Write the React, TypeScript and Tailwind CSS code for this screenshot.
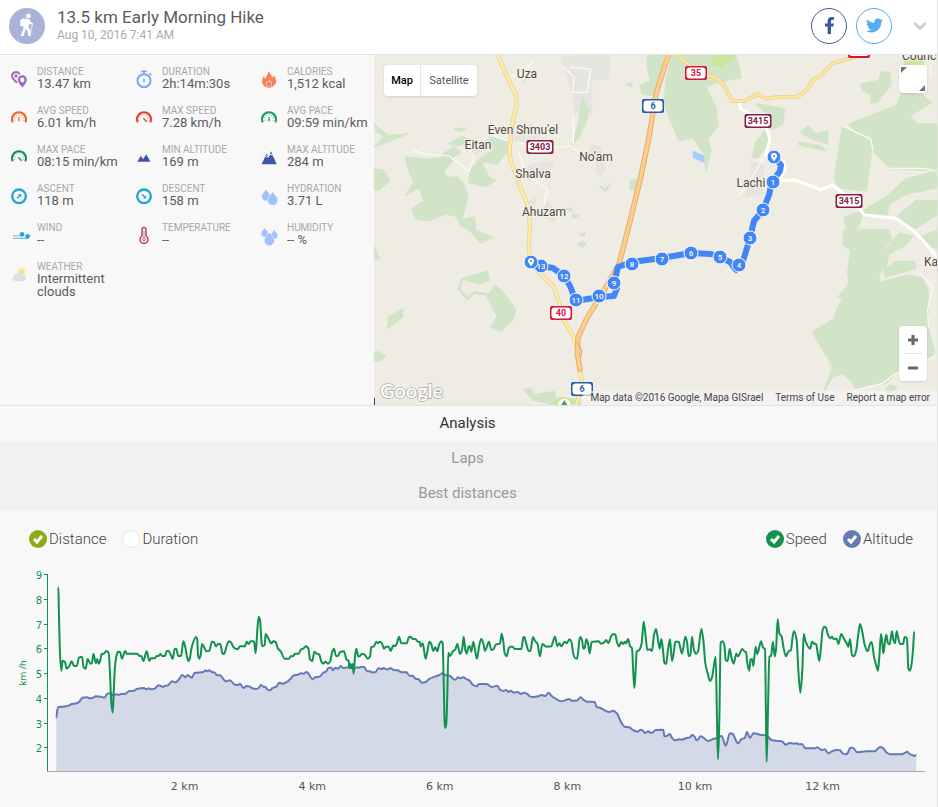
import { useState } from "react";
import type { ReactNode } from "react";
import { FaFacebookF, FaTwitter } from "react-icons/fa";

/* ---------- stat icons, drawn on a 48 unit grid ---------- */

function Gauge({ color, needle }: { color: string; needle: string }) {
  return (
    <g fill="none" stroke={color}>
      <path d="M5 37A21 21 0 1 1 43 37" strokeWidth="6" />
      <path d="M12 32A13 13 0 1 1 36 32" strokeWidth="3" strokeDasharray="3 5" opacity=".7" />
      <path d={needle} strokeWidth="4" />
    </g>
  );
}

const drop = (x: number, y: number, s: number) => (
  <path
    transform={`translate(${x} ${y}) scale(${s})`}
    d="M0 -18C5 -10 14 -3 14 5A14 14 0 0 1 -14 5C-14 -3 -5 -10 0 -18Z"
    fill="#a0c1fd"
    stroke="#f8f8f8"
    strokeWidth="1.500"
  />
);

const icons: Record<string, ReactNode> = {
  distance: (
    <g fill="none" stroke="#a069b4" strokeWidth="7">
      <path d="M18 35C10 27 3 21 3 14A12 11 0 0 1 26 10" strokeWidth="6" />
      <circle cx="15" cy="15" r="3" strokeWidth="4" />
      <path d="M34 44C29 38 24 32 24 26A10 10 0 0 1 44 26C44 32 39 38 34 44Z" />
      <path d="M29 35L34 46L40 35Z" fill="#a069b4" strokeWidth="2" />
    </g>
  ),
  duration: (
    <g fill="none" stroke="#78a7fd">
      <circle cx="24" cy="29" r="19.500" strokeWidth="6" />
      <path d="M16 1H32M24 2V9M40 7L46 12" strokeWidth="5" />
      <path d="M24 23V33" strokeWidth="5" />
    </g>
  ),
  calories: (
    <g>
      <path d="M22 0C27 8 33 13 34 20C37 18 38 15 38 12C43 20 46 27 45 34C43 43 34 50 24 50C12 50 3 42 3 31C3 25 6 20 9 15C10 19 11 22 14 23C15 14 23 9 22 0Z" fill="#f8815a" />
      <path d="M24 24C28 31 34 34 33 39A9 9 0 0 1 15 39C15 35 17 32 19 30L21 34C24 32 25 28 24 24Z" fill="#fbd0c1" />
      <circle cx="24" cy="40" r="7" fill="#f8815a" />
    </g>
  ),
  avgSpeed: <Gauge color="#f26522" needle="M24 22V34" />,
  maxSpeed: <Gauge color="#e0412f" needle="M22 25L32 35" />,
  avgPace: <Gauge color="#12a05c" needle="M24 22V34" />,
  maxPace: <Gauge color="#178a6a" needle="M22 25L32 35" />,
  minAltitude: (
    <g fill="#3f56a6">
      <path d="M4 38L15 19L24 38ZM16 38L31 15L43 38Z" />
      <path d="M12 25L15 19L19 26M26 23L31 15L36 24" stroke="#c9d2ec" strokeWidth="2" fill="none" />
    </g>
  ),
  maxAltitude: (
    <g fill="#3f56a6">
      <path d="M2 46L17 13L30 46ZM15 46L30 7L47 46Z" />
      <path d="M12 24L17 20L20 26M24 20L30 15L35 21" stroke="#e3e8f5" strokeWidth="3" fill="none" />
    </g>
  ),
  ascent: (
    <g stroke="#1fa7d2" fill="none">
      <circle cx="24" cy="25" r="20.500" strokeWidth="7" />
      <path d="M18 31L27 22" strokeWidth="4" />
      <path d="M22 19H30V27Z" fill="#1fa7d2" />
    </g>
  ),
  descent: (
    <g stroke="#1fa7d2" fill="none">
      <circle cx="24" cy="25" r="20.500" strokeWidth="7" />
      <path d="M18 19L27 28" strokeWidth="4" />
      <path d="M30 23V31H22Z" fill="#1fa7d2" />
    </g>
  ),
  hydration: (
    <g>
      {drop(15, 21, 0.95)}
      {drop(35, 31, 1.1)}
    </g>
  ),
  wind: (
    <g fill="none">
      <path d="M6 26H36" stroke="#b9c4cf" strokeWidth="4" />
      <path d="M6 34H50" stroke="#7dc4de" strokeWidth="4" />
      <circle cx="33" cy="22" r="7" fill="#1fa7d2" />
      <circle cx="50" cy="28" r="7" fill="#1fa7d2" />
    </g>
  ),
  temperature: (
    <g fill="none" stroke="#bd5a78">
      <path d="M18 27V8A6 6 0 0 1 30 8V27A12 12 0 1 1 18 27Z" strokeWidth="5" />
      <path d="M24 10V34" stroke="#e0a48c" strokeWidth="4" />
      <circle cx="24" cy="37" r="4" fill="#fff" stroke="#c34f6f" strokeWidth="3" />
    </g>
  ),
  humidity: (
    <g>
      {drop(11, 16, 0.75)}
      {drop(40, 22, 0.75)}
      {drop(25, 35, 1.1)}
    </g>
  ),
  weather: (
    <g>
      <path d="M32 2V30M18 16H48M22 6L43 27M43 6L22 27" stroke="#fbe49a" strokeWidth="3" />
      <circle cx="32" cy="17" r="8" fill="#fbdf85" />
      <path d="M11 46A9 9 0 0 1 10 29A13 12 0 0 1 33 25A10 10 0 0 1 36 46Z" fill="#e1e1e1" />
    </g>
  ),
};

const stats: [string, string, string][] = [
  ["distance", "Distance", "13.47 km"],
  ["duration", "Duration", "2h:14m:30s"],
  ["calories", "Calories", "1,512 kcal"],
  ["avgSpeed", "Avg Speed", "6.01 km/h"],
  ["maxSpeed", "Max Speed", "7.28 km/h"],
  ["avgPace", "Avg Pace", "09:59 min/km"],
  ["maxPace", "Max Pace", "08:15 min/km"],
  ["minAltitude", "Min Altitude", "169 m"],
  ["maxAltitude", "Max Altitude", "284 m"],
  ["ascent", "Ascent", "118 m"],
  ["descent", "Descent", "158 m"],
  ["hydration", "Hydration", "3.71 L"],
  ["wind", "Wind", "--"],
  ["temperature", "Temperature", "--"],
  ["humidity", "Humidity", "-- %"],
  ["weather", "Weather", "Intermittent clouds"],
];

function Header() {
  return (
    <header className="flex h-[55px] items-center border-b border-[#e3e3e3] bg-white pl-[9px] pr-[10px]">
      <svg viewBox="0 0 108 108" className="mb-[3px] size-9 shrink-0" aria-hidden="true">
        <circle cx="54" cy="54" r="54" fill="#a9b3da" />
        <g fill="#fff">
          <circle cx="58" cy="24" r="7" />
          <path d="M34 37L44 30L50 34L45 56L33 53Z" />
          <path d="M51 32L61 33L65 42L72 46L71 51L61 47L58 56L64 66L65 84L58 84L56 70L50 62L44 84L35 84L43 62L45 48Z" />
          <path d="M71 46L63 84" stroke="#fff" strokeWidth="2" />
        </g>
      </svg>
      <div className="mb-[5px] ml-3 flex-1">
        <h1 className="text-[17px] leading-5 text-[#5c5c5c]">13.5 km Early Morning Hike</h1>
        <p className="text-[12px] leading-4 text-[#aaa]">Aug 10, 2016 7:41 AM</p>
      </div>
      <div className="mb-[3px] flex items-center gap-[9px]">
        <button aria-label="Share on Facebook" className="grid size-9 place-items-center rounded-full border border-[#3b5998] text-[#3b5998]">
          <FaFacebookF size={17} />
        </button>
        <button aria-label="Share on Twitter" className="grid size-9 place-items-center rounded-full border border-[#55acee] text-[#55acee]">
          <FaTwitter size={17} />
        </button>
        <button aria-label="More" className="ml-3 grid h-9 w-[14px] place-items-center">
          <svg viewBox="0 0 14 10" className="h-[10px] w-[14px]">
            <path d="M1.500 2L7 7.500L12.500 2" fill="none" stroke="#ccc" strokeWidth="2.500" />
          </svg>
        </button>
      </div>
    </header>
  );
}

function Stats() {
  return (
    <dl className="grid w-[375px] shrink-0 grid-cols-3 content-start gap-y-[15px] pt-[11px]">
      {stats.map(([id, label, value]) => (
        <div key={id} className="flex pl-[11px]">
          <svg viewBox="0 0 48 48" className="mt-[5px] size-4 shrink-0 overflow-visible" aria-hidden="true">
            {icons[id]}
          </svg>
          <div className="ml-[10px]">
            <dt className="text-[10px] leading-[11px] text-[#a8a8a8] uppercase">{label}</dt>
            <dd className="text-[13px] leading-[13px] text-[#5c5c5c]">{value}</dd>
          </div>
        </div>
      ))}
    </dl>
  );
}

/* ---------- map ---------- */

const woods = [
  "95,310 160,315 225,310 235,320 210,350 215,370 250,370 275,400 280,430 265,490 215,480 160,500 125,495 115,465 150,440 135,400 95,425 120,385 105,350",
  "290,345 320,320 345,370 365,380 335,397 285,385",
  "0,345 30,350 45,380 15,408 0,408",
  "350,250 400,265 400,290 370,330 310,320 355,290",
  "0,210 40,245 100,240 60,255 0,280 30,250",
  "225,270 265,248 290,262 250,275",
  "240,225 275,222 260,232",
  "200,305 240,280 260,295 235,310",
  "625,130 635,155 645,165 640,190 620,240 590,280 605,245 615,200",
  "820,10 846,0 870,0 846,125 805,120 800,95 830,80 820,40",
  "757,90 775,88 770,97",
  "770,380 790,375 785,410 768,405",
  "678,395 690,410 710,390 695,412",
  "250,490 270,495 300,490 305,530 355,550 320,566 290,530 262,515",
  "595,482 612,485 600,492",
  "575,465 590,462 595,470",
  "896,0 1086,0 1101,70 1026,85 996,100 1026,160 1031,215 1001,255 1011,290 996,350 991,300 956,250 916,260 886,190 871,150 876,80",
  "1176,155 1231,165 1226,210 1196,225 1191,190 1146,150",
  "1176,228 1186,265 1151,310 1134,310 1146,265",
  "1461,90 1516,80 1521,55 1546,55 1551,90 1511,145 1491,145 1491,120 1466,110",
  "1566,160 1586,115 1646,125 1671,145 1616,180",
  "1426,210 1566,155 1606,180 1626,210 1692,210 1692,350 1551,343 1496,290 1491,255 1446,235",
  "1406,215 1466,245 1496,270 1476,410 1391,400 1381,370 1391,310",
  "1281,235 1301,215 1326,240 1361,230 1361,270 1316,255",
  "1274,265 1336,275 1356,290 1276,272",
  "1692,350 1692,400 1596,420 1546,450 1536,490 1466,485 1446,528 1420,528 1411,490 1466,470 1536,430 1596,375",
  "1566,490 1626,440 1692,440 1692,480 1616,528",
  "1411,528 1546,528 1551,558 1526,588 1544,598 1536,638 1514,658 1516,686 1606,663 1646,673 1661,708 1664,768 1661,818 1680,888 1676,908 1566,958 1536,988 1486,993 1446,1008 1431,978 1406,958 1376,968 1351,1011 1376,938 1316,833 1376,798 1406,733 1394,728 1426,688 1421,658 1431,588 1408,573",
  "1531,648 1566,623 1621,623 1624,643 1536,668",
  "1536,588 1576,538 1616,548 1586,578 1546,598",
  "1641,548 1692,528 1692,583 1656,573",
  "1536,1008 1546,993 1568,998 1546,1018",
  "265,673 340,653 345,678 320,688 290,683",
  "340,728 365,693 385,713 400,733 425,768 415,798 380,831 350,818 370,788",
  "45,788 85,766 85,788 40,823",
  "0,898 15,893 35,908 20,920 0,920",
  "0,578 15,613 0,613",
  "450,1008 470,1003 480,1023 540,1013 550,1053 480,1038",
  "615,542 632,538 630,546",
  "614,570 625,562 635,572 625,580",
];

const villages = [
  "560,10 640,0 655,10 655,76 708,76 655,80 655,180 600,180 595,115 570,50",
  "655,0 708,0 708,76 648,76",
  "290,290 345,240 360,255 300,310",
  "425,220 470,210 500,240 475,270 420,262",
  "470,330 540,320 530,350 480,380 450,350",
  "650,270 680,275 690,310 695,350 680,370 665,350 665,320 640,300",
  "465,440 490,420 485,450 465,465",
  "520,440 550,480 540,510 500,480",
  "1131,320 1170,335 1170,425 1110,430 1130,380",
  "440,80 465,70 445,95",
];

const route40 = "370,0 395,60 425,120 428,150 415,210 406,290 410,320 440,400 465,465 468,528 464,573 470,620 495,655 540,700 557,750 565,790 600,850 612,890 616,950 625,985 606,1056";
const route35 = "906,0 966,50 1031,75 1051,95 1074,140 1111,142 1151,120 1176,134 1206,130 1271,128 1301,105 1316,78 1346,60 1376,28 1421,15 1460,5";
const route6 = "884,0 846,120 825,250 800,370 765,515 735,630 690,710 640,790 612,850 610,900 618,945";
const minorRoads = "M1096 148L1101 165L1146 190L1176 220L1188 255L1176 300L1231 325L1234 345L1216 380L1261 378L1341 407L1376 393L1391 405L1446 450L1471 483L1566 493L1616 528L1650 562L1692 613";
const lanes =
  "M120 290L160 302L225 305L285 352L300 310L290 290L340 250M360 245L400 260M430 265L490 280L555 280L590 275L635 315M598 270V180M570 40L600 70L596 115L640 115L650 45L590 40M435 300L460 360L490 385L520 405L510 450M405 70L440 60L480 20M1176 300L1140 360L1116 400L1090 430M1672 60L1668 40M1636 655L1676 698L1661 768L1664 818M1680 908L1566 958L1526 988L1446 1008L1421 1028M1551 343L1646 343L1692 352M1406 215L1446 235L1491 255L1496 290";

const towns: [number, number, string][] = [
  [153, 24, "Uza"],
  [149, 80, "Even Shmu'el"],
  [104, 95, "Eitan"],
  [222, 107, "No'am"],
  [159, 124, "Shalva"],
  [170, 162, "Ahuzam"],
  [377, 133, "Lachi"],
];

const shields: [number, number, string, string][] = [
  [166, 93, "3403", "#85203f"],
  [384, 67, "3415", "#85203f"],
  [475, 147, "3415", "#85203f"],
  [322, 19, "35", "#d9123c"],
  [187, 259, "40", "#d9123c"],
  [279, 52, "6", "#1d5fb0"],
  [208, 335, "6", "#1d5fb0"],
];

const pins: [number, number, string][] = [
  [167, 212, "13"],
  [190, 222, "12"],
  [202, 246, "11"],
  [225, 242, "10"],
  [240, 229, "9"],
  [258, 210, "8"],
  [288, 205, "7"],
  [317, 199, "6"],
  [346, 203, "5"],
  [365, 211, "4"],
  [376, 184, "3"],
  [389, 156, "2"],
  [399, 128, "1"],
];

function MapView() {
  return (
    <section aria-label="Route map" className="relative -ml-px h-[350px] min-w-0 flex-1 overflow-hidden bg-[#efece4]">
      <svg viewBox="0 1 563 350" preserveAspectRatio="xMidYMid slice" className="size-full">
        <g transform="scale(.33333)" strokeLinejoin="round" strokeLinecap="round">
          {villages.map((p) => (
            <polygon key={p} points={p} fill="#e6e4df" />
          ))}
          {woods.map((p) => (
            <polygon key={p} points={p} fill="#d1e4c8" stroke="#d1e4c8" strokeWidth="5" />
          ))}
          <path d="M265 675L255 705L280 735L300 715L345 722M5 230L50 250" fill="none" stroke="#d1e4c8" strokeWidth="8" />
          <path d="M1006 30L1026 0H1091L1046 42ZM520 1056L560 1028L620 1038V1056ZM1585 10H1650V40L1600 60Z" fill="#c8e69f" />
          <path d="M958 290L991 305V326L956 312Z" fill="#a3ccff" />
          <path d={lanes} fill="none" stroke="#fbfaf8" strokeWidth="4" />
          <path d={minorRoads} fill="none" stroke="#fff" strokeWidth="9" />
          <g fill="none">
            <polyline points={route40} stroke="#e6d08c" strokeWidth="13" />
            <polyline points={route35} stroke="#e6cf8a" strokeWidth="12" />
            <polyline points={route40} stroke="#fdeaa9" strokeWidth="9" />
            <polyline points={route35} stroke="#fde4a0" strokeWidth="8" />
            <polyline points={route6} stroke="#e0a966" strokeWidth="16" />
            <polyline points={route6} stroke="#fdcd8c" strokeWidth="11" />
            <path d="M606 860L624 890L620 910" stroke="#e8b577" strokeWidth="4" />
          </g>
          <circle cx="571" cy="1052" r="18" fill="#fff" />
          <path d="M571 1038L580 1053H562Z" fill="#4f9a4a" />
          <path d="M0 1032H3V1053H0Z" fill="#4b3a2a" />
        </g>
        <g fontFamily="Roboto, sans-serif" fontSize="12" textAnchor="middle" fill="#51483c" stroke="#f3f1ea" strokeWidth="2" paintOrder="stroke">
          {towns.map(([x, y, name]) => (
            <text key={name} x={x} y={y}>{name}</text>
          ))}
          <text x="528" y="6" textAnchor="start">Council</text>
          <text x="550" y="212" textAnchor="start">Ka</text>
        </g>
        <rect x="474" y="-10" width="22" height="14" rx="2" fill="#d9123c" />
        <rect x="475" y="-9" width="20" height="11" rx="3" fill="#fff" />
        {shields.map(([x, y, ref, color]) => {
          const w = ref.length > 2 ? 27 : 22;
          return (
            <g key={`${x}-${ref}`}>
              <rect x={x - w / 2} y={y - 7} width={w} height="14" rx="2" fill={color} />
              <rect x={x - w / 2 + 1.5} y={y - 5.5} width={w - 3} height="11" rx="3" fill="#fff" />
              <text x={x} y={y + 3} textAnchor="middle" fontFamily="Roboto, sans-serif" fontWeight="700" fontSize="9" fill={color}>{ref}</text>
            </g>
          );
        })}
        <path
          d="M400 103L407 111L406 117L398 128L395 141L389 156L380 167L376 184L369 207L362 216L356 208L346 203L337 200L317 199L288 204L258 208L244 213L240 229L243 234L240 242L225 243L202 247L196 232L190 222L179 214L167 212L157 208"
          fill="none"
          stroke="#4285f4"
          strokeWidth="6"
          strokeLinejoin="round"
        />
        {pins.map(([x, y, n]) => (
          <g key={n}>
            <circle cx={x} cy={y} r="7" fill="#4285f4" stroke="#fff" strokeWidth="1" />
            <text x={x} y={y + 3} textAnchor="middle" fontFamily="Roboto, sans-serif" fontWeight="500" fontSize="8" fill="#fff">{n}</text>
          </g>
        ))}
        {[[400, 103], [157, 208]].map(([x, y]) => (
          <g key={x} transform={`translate(${x} ${y})`}>
            <circle r="7" fill="#4285f4" stroke="#fff" />
            <path d="M0 4.500C-2 1.500 -3 0.500 -3 -1A3 3 0 0 1 3 -1C3 0.500 2 1.500 0 4.500Z" fill="#fff" />
            <circle cy="-1" r="1" fill="#4285f4" />
          </g>
        ))}
        <text x="6" y="344" fontFamily="Lato, sans-serif" fontSize="20" fontWeight="600" fill="#fff" stroke="#a9a9a5" strokeWidth="1.500" paintOrder="stroke">Google</text>
      </svg>

      <div className="absolute top-[10px] left-[10px] flex h-[31px] rounded-sm bg-white text-[11px] shadow">
        <button className="w-[37px] border-r border-[#e6e6e6] pt-0.5 font-medium text-black">Map</button>
        <button className="w-14 pt-0.5 text-[#565656]">Satellite</button>
      </div>
      <button aria-label="Full screen" className="absolute top-[10px] right-[10px] size-7 rounded-sm bg-white shadow">
        <svg viewBox="0 0 28 28" fill="#6b7683">
          <path d="M2 2H8L2 8ZM26 20V26H20Z" />
        </svg>
      </button>
      <div className="absolute right-[10px] bottom-6 flex w-7 flex-col items-center rounded-sm bg-white shadow">
        <button aria-label="Zoom in" className="grid h-[27px] w-7 place-items-center">
          <svg viewBox="0 0 12 12" className="size-3" stroke="#666" strokeWidth="3"><path d="M1 6H11M6 1V11" /></svg>
        </button>
        <div className="h-px w-[19px] bg-[#e6e6e6]" />
        <button aria-label="Zoom out" className="grid h-[27px] w-7 place-items-center">
          <svg viewBox="0 0 12 12" className="size-3" stroke="#666" strokeWidth="3"><path d="M1 6H11" /></svg>
        </button>
      </div>
      <div className="absolute right-0 bottom-0 flex h-[14px] gap-3 bg-[#f5f5f5]/70 px-[7px] text-[10px] leading-[14px] whitespace-nowrap text-[#444]">
        <span>Map data ©2016 Google, Mapa GISrael</span>
        <a href="#terms">Terms of Use</a>
        <a href="#report">Report a map error</a>
      </div>
    </section>
  );
}

/* ---------- chart ---------- */

const speed = [
  "175,80 177,170 180,280 184,332 188,302 195,306 200,326 207,320 215,304 222,318 230,318 237,293 246,290 251,322 257,326 263,297 272,311 276,309 280,282 288,310 292,297 296,311 300,304 305,282 313,280 318,273 326,279 330,340 334,430 338,458 341,400 345,320 350,285 354,275 360,276 366,296 372,280 376,273 380,281 412,281 418,288 424,288 430,303 440,274 448,303 453,295 464,295 470,288 476,288 481,281 486,288 495,288 500,273 505,273 511,281 518,297 524,266 529,267 535,288 543,288 550,244 556,262 561,290 565,303 569,297 575,262 588,231 592,240 594,285 598,296 602,285 606,252 612,261 620,274 628,272 636,245 642,247 648,259 654,252 661,252 667,280 672,282 680,258 686,244 693,247 700,261 708,267 714,267 720,259 735,259 740,245 746,252 752,244 762,244 767,280 772,210 776,170 780,180 785,250 788,259 794,255 797,222 804,233 814,250 820,244 827,246 834,266 842,274 854,296 867,296 873,288 879,289 885,281 896,281 903,268 910,266 917,259 925,265 930,298",
  "7,303 13,275 20,281 28,284 34,305 40,311 46,305 54,311 60,305 67,275 72,266 78,288 84,288 90,276 102,274 110,300 116,302 118,325 122,312 125,325 128,312 131,341 135,290 139,266 145,290 150,288 156,281 164,284 173,296 180,290 184,261 192,259 199,245 204,250 210,245 216,250 222,266 228,260 236,260 242,273 250,256 254,259 260,252 267,230 274,250 290,250 297,231 302,230 308,237 316,237 324,245 329,245 332,260 338,250 347,296 353,270 358,245 363,250 370,273 376,262 382,274 388,252 394,244 398,250 401,360 404,490 406,503 409,490 412,400 415,278 420,288 428,275 436,268 442,252 450,282 456,270 461,230 466,270 470,281 475,262 479,258 484,275 490,245 496,275 501,296 508,255 514,237 520,250 525,273 530,262 537,245 544,270 550,268 558,253 570,251 575,221 580,245 584,280 590,289 596,265 602,260 608,260 614,267 634,267 640,233 643,231 648,248 656,273 661,273 669,231 675,243 682,250 690,289 697,252 703,256 710,260 724,259 729,245 735,230 742,258 748,250 754,259 764,245 770,250 778,238 784,245 790,282 795,294 801,296 806,262 808,240 812,231 816,240 820,266 824,264 829,238 834,250 839,280 845,246 866,244 873,251 882,248 888,240 895,249 904,228 910,222 916,224 921,246 927,259",
  "4,246 10,252 15,245 18,250 24,237 30,258 36,265 40,340 43,384 47,330 50,275 58,270 65,250 71,185 77,230 82,270 90,268 96,273 102,225 108,207 114,240 119,266 124,237 129,270 133,308 138,312 144,270 150,238 156,303 161,280 166,245 176,245 181,263 186,281 196,230 201,245 206,288 211,287 216,230 222,270 228,282 234,275 244,207 250,240 256,310 263,340 270,363 276,352 287,290 291,480 294,598 298,480 302,248 307,244 313,254 317,300 323,303 329,266 335,295 341,311 349,281 354,289 367,267 374,275 378,275 382,310 388,332 391,300 396,297 400,318 407,260 412,282 423,244 429,262 435,268 438,480 440,605 444,450 448,290 453,288 459,245 464,289 468,270 473,178 478,220 485,230 491,265 498,289 505,275 513,270 518,230 522,214 530,240 535,330 541,398 547,330 551,222 557,245 570,266 577,245 583,252 588,251 594,285 598,303 603,260 608,210 613,200 618,203 624,225 630,235 636,230 641,237 650,236 655,252 664,222 670,233 680,250 685,260 690,237 696,285 702,289 709,270 714,230 720,192 727,215 733,250 743,274 750,252 755,246 762,290 768,313 774,332 778,290 783,222 787,250 790,280 795,245 799,224 804,250 809,253 816,214 820,238 825,250 830,214 836,240 840,252 849,252 854,231 861,235 865,325 870,332 875,310 879,270 883,214",
];

const altitude = [
  "169,474 172,450 175,441 190,440 208,436 215,432 230,430 238,425 247,413 262,412 268,415 280,413 286,409 302,410 313,413 322,401 330,400 340,406 350,403 357,405 362,402 375,402 388,393 400,393 410,387 432,384 438,388 446,385 453,388 464,386 476,376 490,381 494,377 502,377 516,364 526,367 536,359 547,345 556,352 562,345 575,353 584,339 610,336 617,331 622,334 628,331 636,336 644,338 650,345 660,346 678,364 690,361 704,374 714,375 720,371 730,384 740,378 750,380 757,385 768,387 776,384 783,375 790,380 796,381 803,389 810,391 816,385 830,379 838,368 846,371 857,368 870,358 882,346 894,344 902,340 912,341 920,336 928,345",
  "7,358 14,353 30,349 40,338 48,335 56,323 64,323 69,331 76,323 84,326 92,318 100,324 112,322 126,323 135,324 142,322 148,323 154,320 162,321 172,334 180,334 186,337 196,337 205,325 216,327 220,324 230,328 236,328 241,324 251,330 264,331 270,335 282,337 288,336 300,348 308,347 318,357 324,357 336,368 348,366 356,358 374,350 388,345 397,340 406,345 420,348 430,357 436,359 444,352 450,355 460,352 470,358 478,361 488,374 500,379 507,372 530,372 545,381 562,377 570,389 580,393 588,390 596,396 602,392 612,398 622,396 634,402 641,398 652,402 660,409 670,411 685,409 694,405 706,408 716,398 724,407 740,418 752,424 766,421 776,417 786,422 800,422 812,412 820,419 830,425 854,426 860,441 872,444 884,451 898,456 910,452 922,462",
  "5,490 14,500 28,502 40,511 54,515 62,509 70,513 75,519 84,514 94,519 108,510 130,509 133,529 142,527 150,522 156,534 166,541 176,538 186,539 200,534 210,532 217,524 224,531 230,541 243,529 264,543 280,537 290,534 305,528 317,557 330,520 338,522 354,550 366,536 374,535 381,516 390,534 400,520 420,524 440,527 456,541 476,543 488,545 496,554 510,549 520,551 530,550 536,553 546,552 556,565 584,565 592,562 606,570 614,568 625,580 634,575 650,570 660,571 668,580 678,583 684,578 690,564 698,563 712,577 740,574 764,574 780,561 790,565 800,578 812,583 840,583 850,581 862,575 870,583 880,586 884,588 889,585",
];

/* Joins the parts of a series, each 930 units wide, into a monotone curve. */
function curve(parts: string[]) {
  const pts = parts.flatMap((part, i) =>
    part.split(" ").map((p) => {
      const [x, y] = p.split(",").map(Number);
      return [x + i * 930, y];
    }),
  );
  const slope = (i: number) => {
    if (i === 0 || i === pts.length - 1) return 0;
    const a = (pts[i][1] - pts[i - 1][1]) / (pts[i][0] - pts[i - 1][0]);
    const b = (pts[i + 1][1] - pts[i][1]) / (pts[i + 1][0] - pts[i][0]);
    return a * b <= 0 ? 0 : (2 * a * b) / (a + b);
  };
  let d = `${pts[0][0]} ${pts[0][1]}`;
  for (let i = 1; i < pts.length; i++) {
    const [x0, y0] = pts[i - 1];
    const [x1, y1] = pts[i];
    const h = (x1 - x0) / 3;
    d += `C${x0 + h} ${y0 + slope(i - 1) * h} ${x1 - h} ${y1 - slope(i) * h} ${x1} ${y1}`;
  }
  return d;
}

const speedLine = curve(speed);
const altitudeLine = curve(altitude);

function Option({ type, name, label, fill, checked, onChange }: { type: "radio" | "checkbox"; name: string; label: string; fill: string; checked: boolean; onChange: () => void }) {
  return (
    <label className="flex items-center gap-[2px] text-[15px] leading-[18px] font-light text-[#444]">
      <span className="relative block size-[18px]">
        <input
          type={type}
          name={name}
          checked={checked}
          onChange={onChange}
          className={`block size-[18px] appearance-none rounded-full border border-[#e6e6e6] bg-white checked:border-transparent ${fill}`}
        />
        {checked && (
          <svg viewBox="0 0 18 18" className="pointer-events-none absolute inset-0" fill="none" stroke="#fff" strokeWidth="3">
            <path d="M5 9L8 12L13 6" />
          </svg>
        )}
      </span>
      {label}
    </label>
  );
}

function Analysis() {
  const [axis, setAxis] = useState("distance");
  const [showSpeed, setShowSpeed] = useState(true);
  const [showAltitude, setShowAltitude] = useState(true);
  return (
    <section>
      <div className="flex h-[49px] items-center justify-between px-[29px] pr-6 pt-[7px]">
        <div className="flex gap-4">
          <Option type="radio" name="axis" label="Distance" fill="checked:bg-[#8bab17]" checked={axis === "distance"} onChange={() => setAxis("distance")} />
          <Option type="radio" name="axis" label="Duration" fill="checked:bg-[#8bab17]" checked={axis === "duration"} onChange={() => setAxis("duration")} />
        </div>
        <div className="flex gap-4">
          <Option type="checkbox" name="speed" label="Speed" fill="checked:bg-[#12914f]" checked={showSpeed} onChange={() => setShowSpeed(!showSpeed)} />
          <Option type="checkbox" name="altitude" label="Altitude" fill="checked:bg-[#6479b6]" checked={showAltitude} onChange={() => setShowAltitude(!showAltitude)} />
        </div>
      </div>
      <svg viewBox="0 0 937 247" className="block w-full" role="img" aria-label="Speed and altitude over distance">
        <g transform="scale(.33333)" fill="none" strokeLinejoin="round">
          {showAltitude && (
            <>
              <path d={`M169 633L${altitudeLine}L2749 633Z`} fill="#d4d9e7" />
              <path d={`M${altitudeLine}`} stroke="#6479b6" strokeWidth="6" />
            </>
          )}
          {showSpeed && <path d={`M${speedLine}`} stroke="#12914f" strokeWidth="6" />}
        </g>
        <path d="M47 211.500H925" stroke="#aaa" />
        <path d="M47.500 14V211" stroke="#12914f" />
        <g fontFamily="'DejaVu Sans', sans-serif" fontSize="10" fill="#12914f">
          {[9, 8, 7, 6, 5, 4, 3, 2].map((n, i) => {
            const y = Math.round(14.3 + i * 24.7);
            return (
              <g key={n}>
                <path d={`M44 ${y + 0.5}H48`} stroke="#12914f" />
                <text x="42" y={y + 5} textAnchor="end">{n}</text>
              </g>
            );
          })}
          <text transform="translate(26 113) rotate(-90)" textAnchor="middle" fontSize="9">km /h</text>
        </g>
        <g fontFamily="'DejaVu Sans', sans-serif" fontSize="11" fill="#555" textAnchor="middle">
          {[2, 4, 6, 8, 10, 12].map((n) => (
            <text key={n} x={57 + n * 63.8} y="230">{n} km</text>
          ))}
        </g>
      </svg>
    </section>
  );
}

export default function App() {
  const [tab, setTab] = useState("Analysis");
  return (
    <main className="min-h-screen border-r border-[#e3e3e3] bg-[#f8f8f8] font-[Roboto,sans-serif]">
      <Header />
      <div className="flex border-b border-[#e3e3e3]">
        <Stats />
        <MapView />
      </div>
      <nav className="flex flex-col">
        {["Analysis", "Laps", "Best distances"].map((name) => (
          <button
            key={name}
            onClick={() => setTab(name)}
            className={`h-[35px] pr-0.5 text-[15px] ${tab === name ? "bg-[#f8f8f8] text-[#333]" : "bg-[#f1f1f1] text-[#999]"}`}
          >
            {name}
          </button>
        ))}
      </nav>
      <Analysis />
    </main>
  );
}
